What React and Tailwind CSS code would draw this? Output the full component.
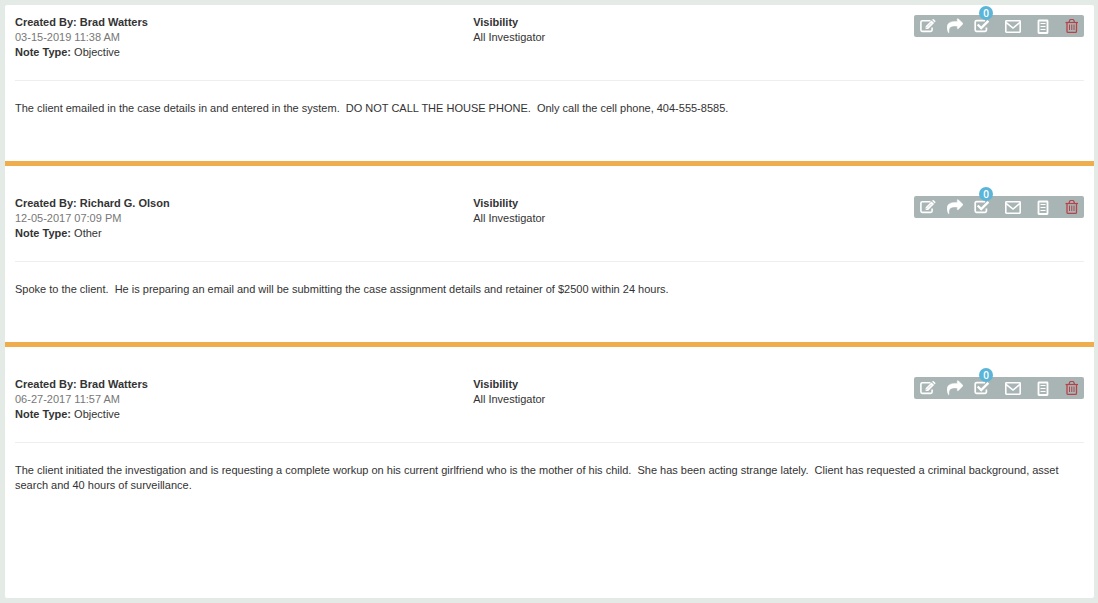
import React from "react";

const notes = [
  {
    id: 1,
    author: "Brad Watters",
    date: "03-15-2019 11:38 AM",
    type: "Objective",
    visibility: "All Investigator",
    tasks: 0,
    body: "The client emailed in the case details in and entered in the system.  DO NOT CALL THE HOUSE PHONE.  Only call the cell phone, 404-555-8585.",
  },
  {
    id: 2,
    author: "Richard G. Olson",
    date: "12-05-2017 07:09 PM",
    type: "Other",
    visibility: "All Investigator",
    tasks: 0,
    body: "Spoke to the client.  He is preparing an email and will be submitting the case assignment details and retainer of $2500 within 24 hours.",
  },
  {
    id: 3,
    author: "Brad Watters",
    date: "06-27-2017 11:57 AM",
    type: "Objective",
    visibility: "All Investigator",
    tasks: 0,
    body: "The client initiated the investigation and is requesting a complete workup on his current girlfriend who is the mother of his child.  She has been acting strange lately.  Client has requested a criminal background, asset search and 40 hours of surveillance.",
  },
];

function EditIcon() {
  return (
    <svg viewBox="0 0 16 16" className="size-4 fill-none stroke-current" aria-hidden="true">
      <path d="M10.5 2.7H2.3Q0.9 2.7 0.9 4.1v8Q0.9 13.4 2.3 13.4h8.4q1.4 0 1.4-1.3V9.6" strokeWidth="1.6" />
      <path d="M5.6 8.3l5.9-5.9 2.6 2.6-5.9 5.9H5.6z" className="fill-current stroke-none" />
      <path d="M12.1 1.8l0.6-0.6q0.5-0.4 1 0l1.6 1.6q0.4 0.5 0 1l-0.6 0.6z" className="fill-current stroke-none" />
      <path d="M7.8 8.6l3.6-3.6" className="stroke-[#a9b5b4]" strokeWidth="0.5" />
      <path d="M6.4 8.9v1.2h1.2z" className="fill-[#a9b5b4] stroke-none" />
    </svg>
  );
}

function ShareIcon() {
  return (
    <svg viewBox="0 0 1792 1792" className="size-4 fill-current stroke-current" strokeWidth="50" aria-hidden="true">
      <path d="M1792 640q0 26-19 45l-512 512q-19 19-45 19t-45-19-19-45v-256h-224q-98 0-175.5 6t-154 21.5-133 42.5-105.5 69.5-80 101-48.5 138.5-17.5 181q0 55 5 123 0 6 2.5 23.5t2.5 26.5q0 15-8.5 25t-23.5 10q-16 0-28-17-7-9-13-22t-13.5-30-10.5-24q-127-285-127-451 0-199 53-333 162-403 875-403h224v-256q0-26 19-45t45-19 45 19l512 512q19 19 19 45z" />
    </svg>
  );
}

function TaskIcon() {
  return (
    <svg viewBox="0 0 16 16" className="size-4 fill-none stroke-current" aria-hidden="true">
      <path d="M11 2.7H2.5Q1.2 2.7 1.2 4v8.1q0 1.3 1.3 1.3h8.6q1.3 0 1.3-1.3V9.5" strokeWidth="1.7" />
      <path d="M3.7 6.5l3.5 3.5 7.2-7.2" strokeWidth="2.4" />
    </svg>
  );
}

function MailIcon() {
  return (
    <svg viewBox="0 0 16 16" className="size-4 fill-none stroke-current" strokeWidth="1.6" aria-hidden="true">
      <rect x="0.8" y="2.8" width="14.4" height="11.4" rx="0.6" />
      <path d="M1 4.4l7 5.6 7-5.6" />
    </svg>
  );
}

function DocumentIcon() {
  return (
    <svg viewBox="0 0 14 16" className="h-4 w-3.5 fill-none stroke-current" aria-hidden="true">
      <rect x="2.5" y="2.5" width="9" height="12.5" rx="0.4" strokeWidth="1.8" />
      <path d="M4.5 5.5h5M4.5 8.5h5M4.5 11.5h5" />
    </svg>
  );
}

function TrashIcon() {
  return (
    <svg viewBox="0 0 14 16" className="h-4 w-3.5 fill-none stroke-current" aria-hidden="true">
      <path d="M0.5 4.5h12.5" strokeWidth="1.2" />
      <path d="M4 4.2l0.8-2.2q0.2-0.5 0.8-0.5h2.3q0.6 0 0.8 0.5l0.8 2.2" strokeWidth="1.2" />
      <path d="M2 4.5v8.7q0 1.2 1.2 1.2h7.1q1.2 0 1.2-1.2V4.5" strokeWidth="1.3" />
      <path d="M4.5 6.5v5.5M6.75 6.5v5.5M9 6.5v5.5" strokeWidth="1" />
    </svg>
  );
}

function Toolbar({ tasks }) {
  return (
    <div className="flex h-[22px] items-center gap-[15px] rounded-xs bg-[#a9b5b4] pr-[5px] pl-1.5 text-white">
      <div className="flex gap-[11px]">
        <button type="button" aria-label="Edit note"><EditIcon /></button>
        <button type="button" aria-label="Share note"><ShareIcon /></button>
        <button type="button" aria-label="Tasks" className="relative">
          <TaskIcon />
          <span className="absolute -top-3 left-[5px] flex size-3.5 items-center justify-center rounded-full bg-[#5bb5d8] font-['Open_Sans',sans-serif] text-[10px] leading-none font-semibold">
            {tasks}
          </span>
        </button>
      </div>
      <button type="button" aria-label="Email note"><MailIcon /></button>
      <button type="button" aria-label="View document"><DocumentIcon /></button>
      <button type="button" aria-label="Delete note" className="text-[#b5434a]"><TrashIcon /></button>
    </div>
  );
}

function Note({ note }) {
  return (
    <article className="border-b-5 border-[#f0ad4e] px-2.5 pt-[30px] pb-[45px] first:pt-2.5 last:border-b-0">
      <header className="grid grid-cols-[3fr_4fr] border-b border-[#eeeeee] pb-5">
        <div>
          <p className="font-bold">Created By: {note.author}</p>
          <p className="text-[#777777]">{note.date}</p>
          <p><b>Note Type:</b> {note.type}</p>
        </div>
        <div className="flex items-start justify-between">
          <div>
            <p className="font-bold">Visibility</p>
            <p>{note.visibility}</p>
          </div>
          <Toolbar tasks={note.tasks} />
        </div>
      </header>
      <p className="pt-5 whitespace-pre-wrap">{note.body}</p>
    </article>
  );
}

export default function App() {
  return (
    <div className="flex min-h-screen flex-col bg-[#e4eae6] py-[5px] pr-1 pl-[5px] font-['Liberation_Sans',Arial,sans-serif] text-[11px] leading-[15px] text-[#333333]">
      <main className="grow rounded-xs bg-white">
        {notes.map((note) => (
          <Note key={note.id} note={note} />
        ))}
      </main>
    </div>
  );
}
